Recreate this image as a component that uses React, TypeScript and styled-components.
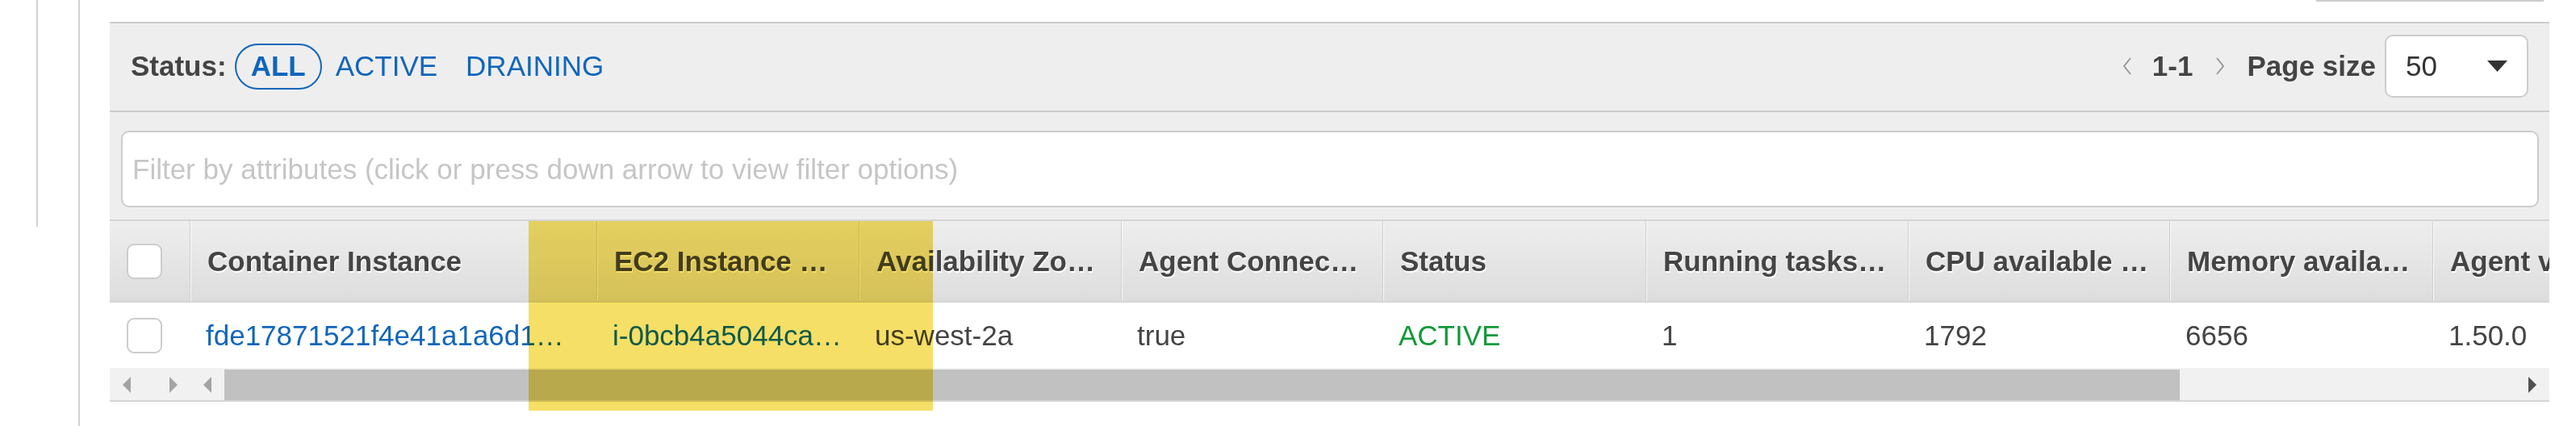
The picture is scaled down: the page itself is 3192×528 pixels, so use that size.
import React from 'react';
import styled, { createGlobalStyle } from 'styled-components';

const COLUMNS = [
  { title: 'Container Instance', width: 504 },
  { title: 'EC2 Instance …', width: 325 },
  { title: 'Availability Zo…', width: 325 },
  { title: 'Agent Connec…', width: 324 },
  { title: 'Status', width: 326 },
  { title: 'Running tasks…', width: 325 },
  { title: 'CPU available …', width: 324 },
  { title: 'Memory availa…', width: 326 },
  { title: 'Agent version', width: 325 },
];

type Tone = 'plain' | 'link' | 'ok';

const ROW: { value: string; tone: Tone }[] = [
  { value: 'fde17871521f4e41a1a6d1…', tone: 'link' },
  { value: 'i-0bcb4a5044ca…', tone: 'link' },
  { value: 'us-west-2a', tone: 'plain' },
  { value: 'true', tone: 'plain' },
  { value: 'ACTIVE', tone: 'ok' },
  { value: '1', tone: 'plain' },
  { value: '1792', tone: 'plain' },
  { value: '6656', tone: 'plain' },
  { value: '1.50.0', tone: 'plain' },
];

const GRID = `99px ${COLUMNS.map((c) => c.width + 'px').join(' ')}`;

export default function App() {
  return (
    <>
      <GlobalStyle />
      <Page>
        <SideNav>
          <SideRail />
        </SideNav>
        <Main>
          <TopStrip>
            <CutButton />
          </TopStrip>
          <Panel>
            <Toolbar>
              <StatusFilter>
                <FilterLabel>Status:</FilterLabel>
                <FilterOption $active $gap={10}>ALL</FilterOption>
                <FilterOption $gap={17}>ACTIVE</FilterOption>
                <FilterOption $gap={35}>DRAINING</FilterOption>
              </StatusFilter>
              <Pager>
                <Chevron viewBox="0 0 12 22" $before={0} $after={25}>
                  <polyline points="10,1 2,11 10,21" />
                </Chevron>
                <PagerText>1-1</PagerText>
                <Chevron viewBox="0 0 12 22" $before={28} $after={27}>
                  <polyline points="2,1 10,11 2,21" />
                </Chevron>
                <PagerText>Page size</PagerText>
                <PageSizeSelect>
                  <span>50</span>
                  <svg width="25" height="14" viewBox="0 0 25 14">
                    <polygon points="0,0 25,0 12.5,14" fill="#333" />
                  </svg>
                </PageSizeSelect>
              </Pager>
            </Toolbar>
            <FilterBar>
              <FilterInput placeholder="Filter by attributes (click or press down arrow to view filter options)" readOnly />
            </FilterBar>
          </Panel>
          <Table>
            <HeaderRow>
              <CheckCell>
                <Checkbox />
              </CheckCell>
              {COLUMNS.map((c) => (
                <HeaderCell key={c.title}>{c.title}</HeaderCell>
              ))}
            </HeaderRow>
            <DataRow>
              <CheckCell>
                <Checkbox />
              </CheckCell>
              {ROW.map((cell, i) => (
                <DataCell key={i} $tone={cell.tone}>
                  {cell.value}
                </DataCell>
              ))}
            </DataRow>
            <ScrollBar>
              <ScrollArrow viewBox="0 0 10 20" $gap={16} $dark={false}>
                <polygon points="10,0 0,10 10,20" />
              </ScrollArrow>
              <ScrollArrow viewBox="0 0 10 20" $gap={48} $dark={false}>
                <polygon points="0,0 10,10 0,20" />
              </ScrollArrow>
              <ScrollArrow viewBox="0 0 10 20" $gap={32} $dark={false}>
                <polygon points="10,0 0,10 10,20" />
              </ScrollArrow>
              <ScrollThumb $width={2423} />
              <ScrollSpacer />
              <ScrollArrow viewBox="0 0 10 20" $gap={0} $dark>
                <polygon points="0,0 10,10 0,20" />
              </ScrollArrow>
            </ScrollBar>
          </Table>
          <Highlight />
        </Main>
      </Page>
    </>
  );
}

const GlobalStyle = createGlobalStyle`
  html, body {
    margin: 0;
    padding: 0;
    background: #fff;
  }
  body {
    font-family: "Liberation Sans", Arial, sans-serif;
  }
  * {
    box-sizing: border-box;
  }
`;

const Page = styled.div`
  display: flex;
  width: 3192px;
  height: 528px;
  overflow: hidden;
  background: #fff;
`;

const SideNav = styled.nav`
  flex: none;
  width: 99px;
  border-right: 2px solid #d3d3d3;
`;

const SideRail = styled.div`
  width: 47px;
  height: 281px;
  border-right: 2px solid #d3d3d3;
`;

const Main = styled.main`
  position: relative;
  flex: 1;
  min-width: 0;
  padding: 0 33px 0 37px;
`;

const TopStrip = styled.div`
  display: flex;
  justify-content: flex-end;
  height: 27px;
  padding-right: 7px;
`;

const CutButton = styled.div`
  width: 282px;
  height: 2px;
  border-bottom: 2px solid #ccc;
`;

const Panel = styled.section`
  background: #eee;
  border-top: 2px solid #ccc;
`;

const Toolbar = styled.div`
  display: flex;
  align-items: center;
  justify-content: space-between;
  height: 110px;
  padding: 14px 26px 16px 26px;
  border-bottom: 2px solid #ccc;
  font-size: 35px;
`;

const StatusFilter = styled.div`
  display: flex;
  align-items: center;
`;

const FilterLabel = styled.span`
  font-weight: bold;
  color: #444;
`;

const FilterOption = styled.span<{ $active?: boolean; $gap: number }>`
  display: inline-flex;
  align-items: center;
  margin-left: ${(p) => p.$gap}px;
  color: #1166bb;
  ${(p) =>
    p.$active &&
    `
    height: 57px;
    padding: 0 18px;
    border: 2px solid #1166bb;
    border-radius: 30px;
    font-weight: bold;
  `}
`;

const Pager = styled.div`
  display: flex;
  align-items: center;
`;

const Chevron = styled.svg<{ $before: number; $after: number }>`
  width: 12px;
  height: 22px;
  margin: 0 ${(p) => p.$after}px 0 ${(p) => p.$before}px;
  fill: none;
  stroke: #999;
  stroke-width: 2;
`;

const PagerText = styled.span`
  font-weight: bold;
  color: #444;
`;

const PageSizeSelect = styled.div`
  display: flex;
  align-items: center;
  justify-content: space-between;
  width: 178px;
  height: 78px;
  margin-left: 11px;
  padding: 0 24px;
  background: #fff;
  border: 2px solid #ccc;
  border-radius: 10px;
  color: #333;
`;

const FilterBar = styled.div`
  padding: 23px 13px 15px 14px;
`;

const FilterInput = styled.input`
  display: block;
  width: 100%;
  height: 95px;
  padding: 0 12px;
  border: 2px solid #ccc;
  border-radius: 10px;
  background: #fff;
  font-family: "Liberation Sans", Arial, sans-serif;
  font-size: 35px;
  color: #444;
  outline: none;

  &::placeholder {
    color: #c6c6c6;
  }
`;

const Table = styled.div`
  background: #fff;
  border-top: 2px solid #d5d5d5;
  overflow: hidden;
  font-size: 35px;
`;

const HeaderRow = styled.div`
  display: grid;
  grid-template-columns: ${GRID};
  height: 101px;
  background: linear-gradient(#eeeeee, #dddddd);
  border-bottom: 2px solid #d5d5d5;
`;

const CheckCell = styled.div`
  display: flex;
  align-items: center;
  padding-left: 21px;
`;

const Checkbox = styled.span`
  width: 44px;
  height: 44px;
  background: #fff;
  border: 2px solid #ccc;
  border-radius: 9px;
`;

const HeaderCell = styled.div`
  display: flex;
  align-items: center;
  padding-left: 21px;
  border-left: 1px solid #cfcfcf;
  box-shadow: inset 1px 0 0 #f8f8f8;
  font-weight: bold;
  color: #444;
  text-shadow: 1px 2px 0 #fff;
  white-space: nowrap;
  overflow: hidden;
`;

const TONES: Record<Tone, string> = {
  plain: '#444',
  link: '#1166bb',
  ok: '#129a3a',
};

const DataRow = styled.div`
  display: grid;
  grid-template-columns: ${GRID};
  height: 81px;
`;

const DataCell = styled.div<{ $tone: Tone }>`
  display: flex;
  align-items: center;
  padding-left: 20px;
  color: ${(p) => TONES[p.$tone]};
  white-space: nowrap;
  overflow: hidden;
`;

const ScrollBar = styled.div`
  display: flex;
  align-items: stretch;
  height: 42px;
  padding-top: 2px;
  background: #f1f1f1;
  border-bottom: 2px solid #d5d5d5;
`;

const ScrollArrow = styled.svg<{ $gap: number; $dark: boolean }>`
  align-self: center;
  flex: none;
  width: 10px;
  height: 20px;
  margin-left: ${(p) => p.$gap}px;
  margin-right: ${(p) => (p.$dark ? 16 : 0)}px;
  fill: ${(p) => (p.$dark ? '#505050' : '#a3a3a3')};
`;

const ScrollThumb = styled.div<{ $width: number }>`
  flex: none;
  width: ${(p) => p.$width}px;
  margin-left: 16px;
  background: #c1c1c1;
`;

const ScrollSpacer = styled.div`
  flex: 1;
`;

const Highlight = styled.div`
  position: absolute;
  left: 556px;
  top: 274px;
  width: 501px;
  height: 235px;
  background: #f5df66;
  mix-blend-mode: multiply;
  pointer-events: none;
`;
